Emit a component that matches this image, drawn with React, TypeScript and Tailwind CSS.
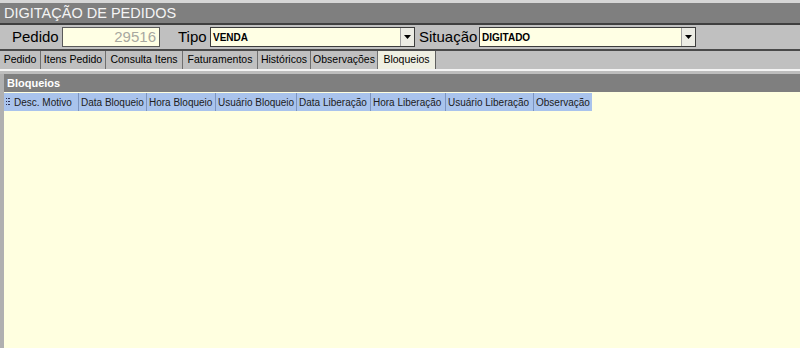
const tabs = [
  { label: "Pedido", w: "w-[41px]" },
  { label: "Itens Pedido", w: "w-[65px]" },
  { label: "Consulta Itens", w: "w-[77px]" },
  { label: "Faturamentos", w: "w-[75px]" },
  { label: "Históricos", w: "w-[53px]" },
  { label: "Observações", w: "w-[67px]" },
];

const columns = [
  { label: "Desc. Motivo", w: "w-[66px]" },
  { label: "Data Bloqueio", w: "w-[68px]" },
  { label: "Hora Bloqueio", w: "w-[69px]" },
  { label: "Usuário Bloqueio", w: "w-[81px]" },
  { label: "Data Liberação", w: "w-[74px]" },
  { label: "Hora Liberação", w: "w-[75px]" },
  { label: "Usuário Liberação", w: "w-[88px]" },
  { label: "Observação", w: "w-[59px]" },
];

function Combo({ value, width }: { value: string; width: string }) {
  return (
    <div
      className={`flex h-[20px] ${width} shrink-0 items-stretch border border-[#3c3c3c] bg-[#ffffe4]`}
    >
      <div className="flex flex-1 items-center px-[2px] text-[10px] font-bold text-black">
        {value}
      </div>
      <div className="flex w-[14px] items-center justify-center border-l border-[#a0a0a0] bg-[#ecece4]">
        <svg width="7" height="4" viewBox="0 0 7 4">
          <polygon points="0,0 7,0 3.5,4" fill="#000" />
        </svg>
      </div>
    </div>
  );
}

export default function App() {
  return (
    <div className="flex h-[348px] w-[800px] flex-col overflow-hidden bg-[#c0c0c0] font-['Liberation_Sans',Arial,sans-serif]">
      <div className="h-[3px] bg-[#d6d6d6]" />

      {/* title */}
      <div className="flex h-[20px] items-center bg-[#7f7f7f] px-[4px] text-[14.5px] leading-none text-[#f4f4f4]">
        DIGITAÇÃO DE PEDIDOS
      </div>
      <div className="h-[2px] bg-[#3f3f3f]" />

      {/* header fields */}
      <div className="flex h-[24px] items-center bg-[#c0c0c0] text-[15px] text-black">
        <span className="ml-[12px] w-[50px] shrink-0">Pedido</span>
        <div className="flex h-[20px] w-[98px] shrink-0 items-center justify-end border border-[#5a5a5a] bg-[#ffffe4] pr-[3px] text-[15px] text-[#a8a8a0]">
          29516
        </div>
        <span className="ml-[18px] w-[32px] shrink-0">Tipo</span>
        <Combo value="VENDA" width="w-[205px]" />
        <span className="ml-[4px] w-[60px] shrink-0">Situação</span>
        <Combo value="DIGITADO" width="w-[217px]" />
      </div>
      <div className="h-[2px] bg-[#4a4a4a]" />

      {/* tabs */}
      <div className="flex h-[18px] items-stretch bg-[#c0c0c0] text-[10.5px] text-black">
        {tabs.map((t) => (
          <div
            key={t.label}
            className={`flex ${t.w} items-center justify-center whitespace-nowrap border-r border-[#707070]`}
          >
            {t.label}
          </div>
        ))}
        <div className="flex w-[58px] items-center justify-center border-r border-[#606060] bg-[#efefe2]">
          Bloqueios
        </div>
      </div>
      <div className="h-[2px] bg-[#f4f4f4]" />
      <div className="h-[3px] bg-[#bdbdbd]" />

      {/* panel */}
      <div className="flex flex-1 flex-col border-l-[4px] border-[#b0b0b0] bg-[#ffffe0]">
        <div className="flex h-[18px] items-center bg-[#7f7f7f] px-[3px] text-[11px] font-bold text-white">
          Bloqueios
        </div>
        <div className="h-[1px]" />
        <div className="flex h-[18px] items-stretch text-[10px] text-[#202020]">
          <div className="flex w-[8px] items-center justify-center bg-[#a9c3ec]">
            <svg width="4" height="8" viewBox="0 0 4 8">
              <rect x="0" y="0" width="1" height="1" fill="#303050" />
              <rect x="2" y="0" width="2" height="1" fill="#303050" />
              <rect x="0" y="3" width="1" height="1" fill="#303050" />
              <rect x="2" y="3" width="2" height="1" fill="#303050" />
              <rect x="0" y="6" width="1" height="1" fill="#303050" />
              <rect x="2" y="6" width="2" height="1" fill="#303050" />
            </svg>
          </div>
          {columns.map((c, i) => (
            <div
              key={c.label}
              className={`flex ${c.w} items-center overflow-hidden whitespace-nowrap bg-[#a9c3ec] pl-[2px] ${
                i === 0 ? "" : "border-l border-[#7d95c0]"
              }`}
            >
              {c.label}
            </div>
          ))}
        </div>
      </div>
    </div>
  );
}
